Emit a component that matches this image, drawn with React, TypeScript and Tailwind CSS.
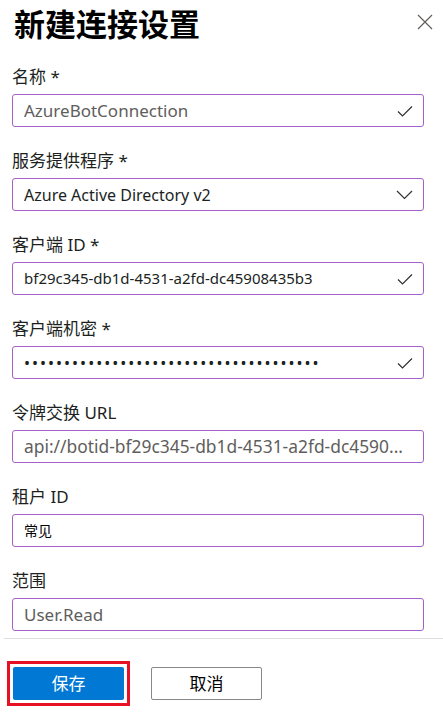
import React from 'react';

const font = { fontFamily: '"Segoe UI", "Noto Sans", "Noto Sans CJK SC", sans-serif' };

function Check() {
  return (
    <svg width="16" height="12" viewBox="0 0 16 12" fill="none">
      <path d="M1 6.5 L5.5 11 L15 1.5" stroke="#323130" strokeWidth="1.2" />
    </svg>
  );
}

function Chevron() {
  return (
    <svg width="17" height="10" viewBox="0 0 17 10" fill="none">
      <path d="M1 1 L8.5 8.5 L16 1" stroke="#323130" strokeWidth="1.2" />
    </svg>
  );
}

interface FieldProps {
  label: string;
  value: string;
  valueClass: string;
  icon?: React.ReactNode;
}

function Field({ label, value, valueClass, icon }: FieldProps) {
  return (
    <div className="flex flex-col">
      <div className="h-[20px] leading-[20px] text-[17px] text-[#201f1e]">{label}</div>
      <div className="mt-[7px] h-[33px] w-[412px] rounded-[3px] border-[1.5px] border-[#a55fc6] flex items-center pl-[11px] pr-[10px]">
        <span className={'flex-1 truncate ' + valueClass}>{value}</span>
        {icon && <span className="ml-2 flex items-center">{icon}</span>}
      </div>
    </div>
  );
}

export default function App() {
  return (
    <div className="w-[443px] h-[723px] bg-white overflow-hidden" style={font}>
      {/* header */}
      <div className="flex items-start justify-between pl-[14px] pr-[10px] pt-[3px] h-[67px]">
        <h1 className="text-[31px] leading-[42px] font-bold text-black">新建连接设置</h1>
        <svg className="mt-[11px]" width="16" height="16" viewBox="0 0 16 16" fill="none">
          <path d="M1 1 L15 15 M15 1 L1 15" stroke="#605e5c" strokeWidth="1.2" />
        </svg>
      </div>

      <div className="pl-[12px] flex flex-col gap-[24px]">
        <Field label="名称 *" value="AzureBotConnection" valueClass="text-[17px] text-[#605e5c]" icon={<Check />} />
        <Field label="服务提供程序 *" value="Azure Active Directory v2" valueClass="text-[16px] text-[#201f1e]" icon={<Chevron />} />
        <Field label="客户端 ID *" value="bf29c345-db1d-4531-a2fd-dc45908435b3" valueClass="text-[15px] text-[#201f1e]" icon={<Check />} />
        <Field label="客户端机密 *" value={'•'.repeat(37)} valueClass="text-[16px] tracking-[2px] text-[#201f1e]" icon={<Check />} />
        <Field label="令牌交换 URL" value="api://botid-bf29c345-db1d-4531-a2fd-dc4590..." valueClass="text-[17.4px] text-[#605e5c] whitespace-nowrap" />
        <Field label="租户 ID" value="常见" valueClass="text-[14px] text-black" />
        <Field label="范围" value="User.Read" valueClass="text-[17px] text-[#605e5c]" />
      </div>

      <div className="mt-[7px] ml-[4px] border-t border-[#e1dfdd]" />

      {/* footer */}
      <div className="flex items-center pl-[7px] pt-[22px] gap-[21px]">
        <div className="border-[3px] border-[#e81123] p-[3px]">
          <button className="w-[111px] h-[33px] rounded-[2px] bg-[#0078d4] text-white text-[17px]">保存</button>
        </div>
        <button className="w-[111px] h-[33px] rounded-[2px] border border-[#8a8886] bg-white text-black text-[17px]">取消</button>
      </div>
    </div>
  );
}
